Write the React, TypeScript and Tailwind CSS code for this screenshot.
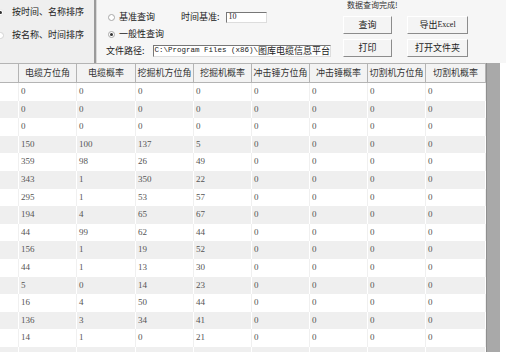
const cjk = "font-['Noto_Sans_CJK_SC','Liberation_Sans',sans-serif]"
const num = "font-['Liberation_Serif','Noto_Sans_CJK_SC',serif]"

const Radio = ({ checked, className = '' }: { checked?: boolean; className?: string }) => (
  <span
    className={`flex items-center justify-center w-[7px] h-[7px] rounded-full border border-[#a8a8a8] bg-white shrink-0 ${className}`}
  >
    {checked && <span className="w-[3px] h-[3px] rounded-full bg-[#333]" />}
  </span>
)

const Btn = ({ children, w }: { children: React.ReactNode; w: string }) => (
  <div
    className={`${w} h-[18px] flex items-center justify-center bg-[#f4f4f4] border border-t-white border-l-white border-r-[#8c8c8c] border-b-[#8c8c8c] text-[9px] text-[#222]`}
  >
    {children}
  </div>
)

const headers = ['电缆方位角', '电缆概率', '挖掘机方位角', '挖掘机概率', '冲击锤方位角', '冲击锤概率', '切割机方位角', '切割机概率']

const data = [
  [0, 0, 0, 0],
  [0, 0, 0, 0],
  [0, 0, 0, 0],
  [150, 100, 137, 5],
  [359, 98, 26, 49],
  [343, 1, 350, 22],
  [295, 1, 53, 57],
  [194, 4, 65, 67],
  [44, 99, 62, 44],
  [156, 1, 19, 52],
  [44, 1, 13, 30],
  [5, 0, 14, 23],
  [16, 4, 50, 44],
  [136, 3, 34, 41],
  [14, 1, 0, 21],
]

const cols = 'grid grid-cols-[19px_58px_59px_58px_58px_58px_58px_58px_60px]'

export default function App() {
  return (
    <div className={`w-[506px] h-[357px] bg-white overflow-hidden ${cjk}`}>
      {/* top form */}
      <div className="flex h-[63px]">
        <div className="w-[94px] bg-[#efefef] flex flex-col pt-[6px] gap-[11px] overflow-hidden text-[9px] text-[#222]">
          <div className="flex items-center h-[12px] gap-[8px] ml-[-3px]">
            <Radio checked className="border-[#e8e8e8]" />
            <span>按时间、名称排序</span>
          </div>
          <div className="flex items-center h-[12px] gap-[8px] ml-[-3px]">
            <Radio className="border-[#d4d4d4]" />
            <span>按名称、时间排序</span>
          </div>
        </div>
        <div className="w-[3px] bg-[#9a9a9a] border-r border-[#d8d8d8]" />
        <div className="flex-1 bg-[#f6f6f6] flex text-[9px] text-[#222]">
          <div className="w-[245px] flex flex-col pl-[9px]">
            <div className="flex items-center mt-[11px] h-[12px]">
              <div className="flex items-center gap-[4px] w-[75px] pl-[2px]">
                <Radio />
                <span>基准查询</span>
              </div>
              <span>时间基准:</span>
              <div className={`ml-[6px] w-[41px] h-[11px] bg-white border border-t-[#777] border-l-[#777] border-r-[#ddd] border-b-[#ddd] flex items-center pl-[2px] text-[8px] ${num}`}>
                10
              </div>
            </div>
            <div className="flex items-center gap-[4px] mt-[5px] h-[12px] pl-[2px]">
              <Radio checked />
              <span>一般性查询</span>
            </div>
            <div className="flex items-center mt-[5px] h-[12px]">
              <span>文件路径:</span>
              <div className="ml-[8px] w-[178px] h-[12px] bg-white border border-t-[#777] border-l-[#777] border-r-[#ddd] border-b-[#ddd] flex items-center pl-[1px] overflow-hidden whitespace-nowrap">
                <span className="font-['Liberation_Mono',monospace] text-[7.5px]">C:\Program Files (x86)\</span>
                <span className="text-[9px]">图库电缆信息平台</span>
              </div>
            </div>
          </div>
          <div className="flex flex-col ml-[1px]">
            <div className="h-[10px] leading-[10px] text-[8px] text-[#333] pl-[4px]">数据查询完成!</div>
            <div className="flex gap-[15px] mt-[6px]">
              <Btn w="w-[49px]">查询</Btn>
              <Btn w="w-[61px]">
                导出<span className={`${num} text-[8px]`}>Excel</span>
              </Btn>
            </div>
            <div className="flex gap-[15px] mt-[5px]">
              <Btn w="w-[49px]">打印</Btn>
              <Btn w="w-[61px]">打开文件夹</Btn>
            </div>
          </div>
        </div>
      </div>

      {/* table */}
      <div className="flex h-[289px]">
        <div className="w-[486px] overflow-hidden">
          <div className={`${cols} h-[20px] bg-[#f3f3f3] border-t border-[#b4b4b4]`}>
            <div className="border-r border-b border-[#b4b4b4]" />
            {headers.map((h) => (
              <div
                key={h}
                className="border-r border-b border-[#b4b4b4] flex items-center justify-center text-[9px] text-[#333] whitespace-nowrap overflow-hidden"
              >
                {h}
              </div>
            ))}
          </div>
          {[...data, null].map((r, i) => {
            const row = r ? [...r, 0, 0, 0, 0] : Array(8).fill('')
            const gray = i % 2 === 1
            return (
              <div
                key={i}
                className={`${cols} h-[17.6px] ${gray ? 'bg-[#efefef]' : 'bg-white'}`}
              >
                <div className={`border-r ${gray ? 'border-white' : 'border-[#f0f0f0]'}`} />
                {row.map((v, j) => (
                  <div
                    key={j}
                    className={`border-r ${gray ? 'border-white' : 'border-[#f0f0f0]'} flex items-center pl-[2px] text-[9px] text-[#555] ${num}`}
                  >
                    {v}
                  </div>
                ))}
              </div>
            )
          })}
        </div>
        <div className="w-[14px] bg-[#a9a9a9] border-l border-[#8f8f8f]" />
      </div>
    </div>
  )
}
